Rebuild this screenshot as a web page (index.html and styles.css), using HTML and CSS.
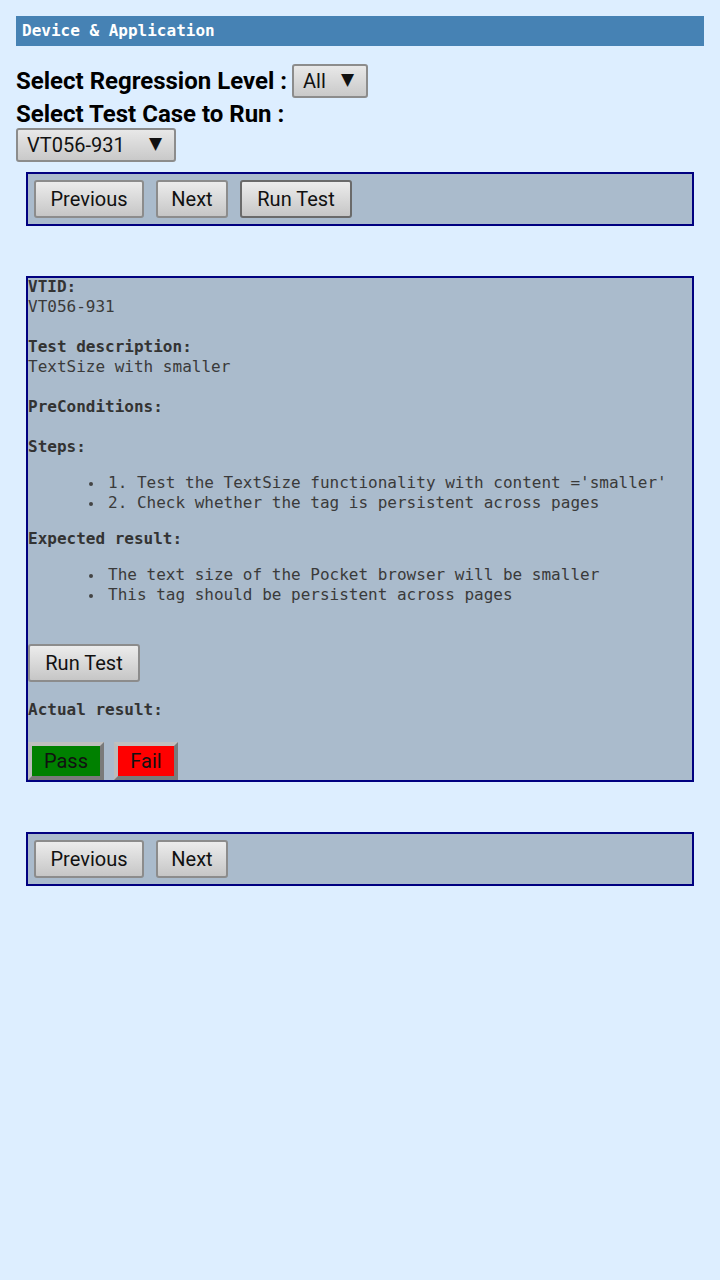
FILE: index.html
```html
<!DOCTYPE html>
<html>
<head>
<meta charset="utf-8">
<link rel="stylesheet" href="styles.css">
</head>
<body>
<div class="page">
  <div class="header">Device &amp; Application</div>

  <div class="row row-level">
    <span class="label">Select Regression Level :</span>
    <div class="select select-level"><span>All</span><span class="arrow">▼</span></div>
  </div>
  <div class="label label-case">Select Test Case to Run :</div>
  <div class="select select-case"><span>VT056-931</span><span class="arrow">▼</span></div>

  <div class="box nav">
    <button class="btn btn-prev">Previous</button>
    <button class="btn btn-next">Next</button>
    <button class="btn btn-run focused">Run Test</button>
  </div>

  <div class="box details">
    <p class="key">VTID:</p>
    <p class="val gap">VT056-931</p>
    <p class="key">Test description:</p>
    <p class="val gap">TextSize with smaller</p>
    <p class="key gap">PreConditions:</p>
    <p class="key">Steps:</p>
    <ul class="list">
      <li>1. Test the TextSize functionality with content ='smaller'</li>
      <li>2. Check whether the tag is persistent across pages</li>
    </ul>
    <p class="key">Expected result:</p>
    <ul class="list">
      <li>The text size of the Pocket browser will be smaller</li>
      <li>This tag should be persistent across pages</li>
    </ul>
    <button class="btn btn-inner">Run Test</button>
    <p class="key actual">Actual result:</p>
    <div class="verdict">
      <button class="vbtn pass">Pass</button>
      <button class="vbtn fail">Fail</button>
    </div>
  </div>

  <div class="box nav nav-bottom">
    <button class="btn btn-prev">Previous</button>
    <button class="btn btn-next">Next</button>
  </div>
</div>
</body>
</html>
```

FILE: styles.css
```css
html, body {
  margin: 0;
  padding: 0;
  background: #ddeeff;
}

.page {
  padding: 16px;
  font-family: Roboto, "Liberation Sans", sans-serif;
  color: #000;
}

.header {
  height: 30px;
  line-height: 29px;
  background: #4682b4;
  color: #fff;
  font-family: "DejaVu Sans Mono", "Liberation Mono", monospace;
  font-weight: bold;
  font-size: 16px;
  padding-left: 6px;
}

.row {
  display: flex;
  align-items: center;
}

.row-level {
  margin-top: 18px;
  height: 34px;
  gap: 5px;
}

.label {
  font-weight: bold;
  font-size: 24px;
  line-height: 30px;
}

.label-case {
  margin-top: 0;
  line-height: 32px;
  padding-top: 0;
  height: 30px;
}

.select {
  display: inline-flex;
  align-items: center;
  justify-content: space-between;
  box-sizing: border-box;
  height: 34px;
  border: 2px solid #8c8c8c;
  border-radius: 3px;
  background: linear-gradient(#e8e8e8, #c9c9c9);
  font-size: 20px;
  padding: 0 12px 0 9px;
  color: #111;
}

.select .arrow {
  font-size: 17px;
  font-family: "DejaVu Sans", sans-serif;
  margin-top: -4px;
}

.select-level {
  width: 76px;
}

.select-case {
  width: 160px;
}

.box {
  margin: 10px 10px 0 10px;
  border: 2px solid #000080;
  background: #aabbcc;
}

.nav {
  display: flex;
  gap: 12px;
  padding: 6px;
}

.btn {
  box-sizing: border-box;
  height: 38px;
  border: 2px solid #8c8c8c;
  border-radius: 3px;
  background: linear-gradient(#ececec, #c6c6c6);
  font-family: Roboto, "Liberation Sans", sans-serif;
  font-size: 20px;
  color: #111;
  padding: 0;
  margin: 0;
}

.btn.focused {
  border-color: #6a6a6a;
}

.btn-prev { width: 110px; }
.btn-next { width: 72px; }
.btn-run { width: 112px; }

.details {
  margin-top: 50px;
  padding: 0;
  font-family: "DejaVu Sans Mono", "Liberation Mono", monospace;
  font-size: 16px;
  line-height: 20px;
  color: #3a3a3a;
}

.details p {
  margin: 0;
}

.details .key {
  font-weight: bold;
  color: #333;
}

.details .val {
  font-weight: normal;
}

.details > .key:first-child {
  margin-top: -1px;
}

.details .gap {
  margin-bottom: 20px;
}

.list {
  margin: 16px 0;
  padding-left: 80px;
  list-style: none;
}

.list li {
  position: relative;
}

.list li::before {
  content: "";
  position: absolute;
  left: -19px;
  top: 9px;
  width: 4px;
  height: 4px;
  border-radius: 50%;
  background: #444;
}

.btn-inner {
  display: block;
  width: 112px;
  margin-top: 39px;
}

.details .actual {
  margin-top: 18px;
}

.verdict {
  display: flex;
  gap: 10px;
  margin-top: 22px;
}

.vbtn {
  box-sizing: border-box;
  height: 38px;
  border: 4px solid;
  border-color: #c0c0c0 #7a7a7a #7a7a7a #bcbcbc;
  border-radius: 0;
  font-family: Roboto, "Liberation Sans", sans-serif;
  font-size: 20px;
  color: #111;
  padding: 0;
  margin: 0;
}

.pass {
  width: 76px;
  background: #008000;
}

.fail {
  width: 64px;
  background: #ff0000;
}

.nav-bottom {
  margin-top: 50px;
}
```
